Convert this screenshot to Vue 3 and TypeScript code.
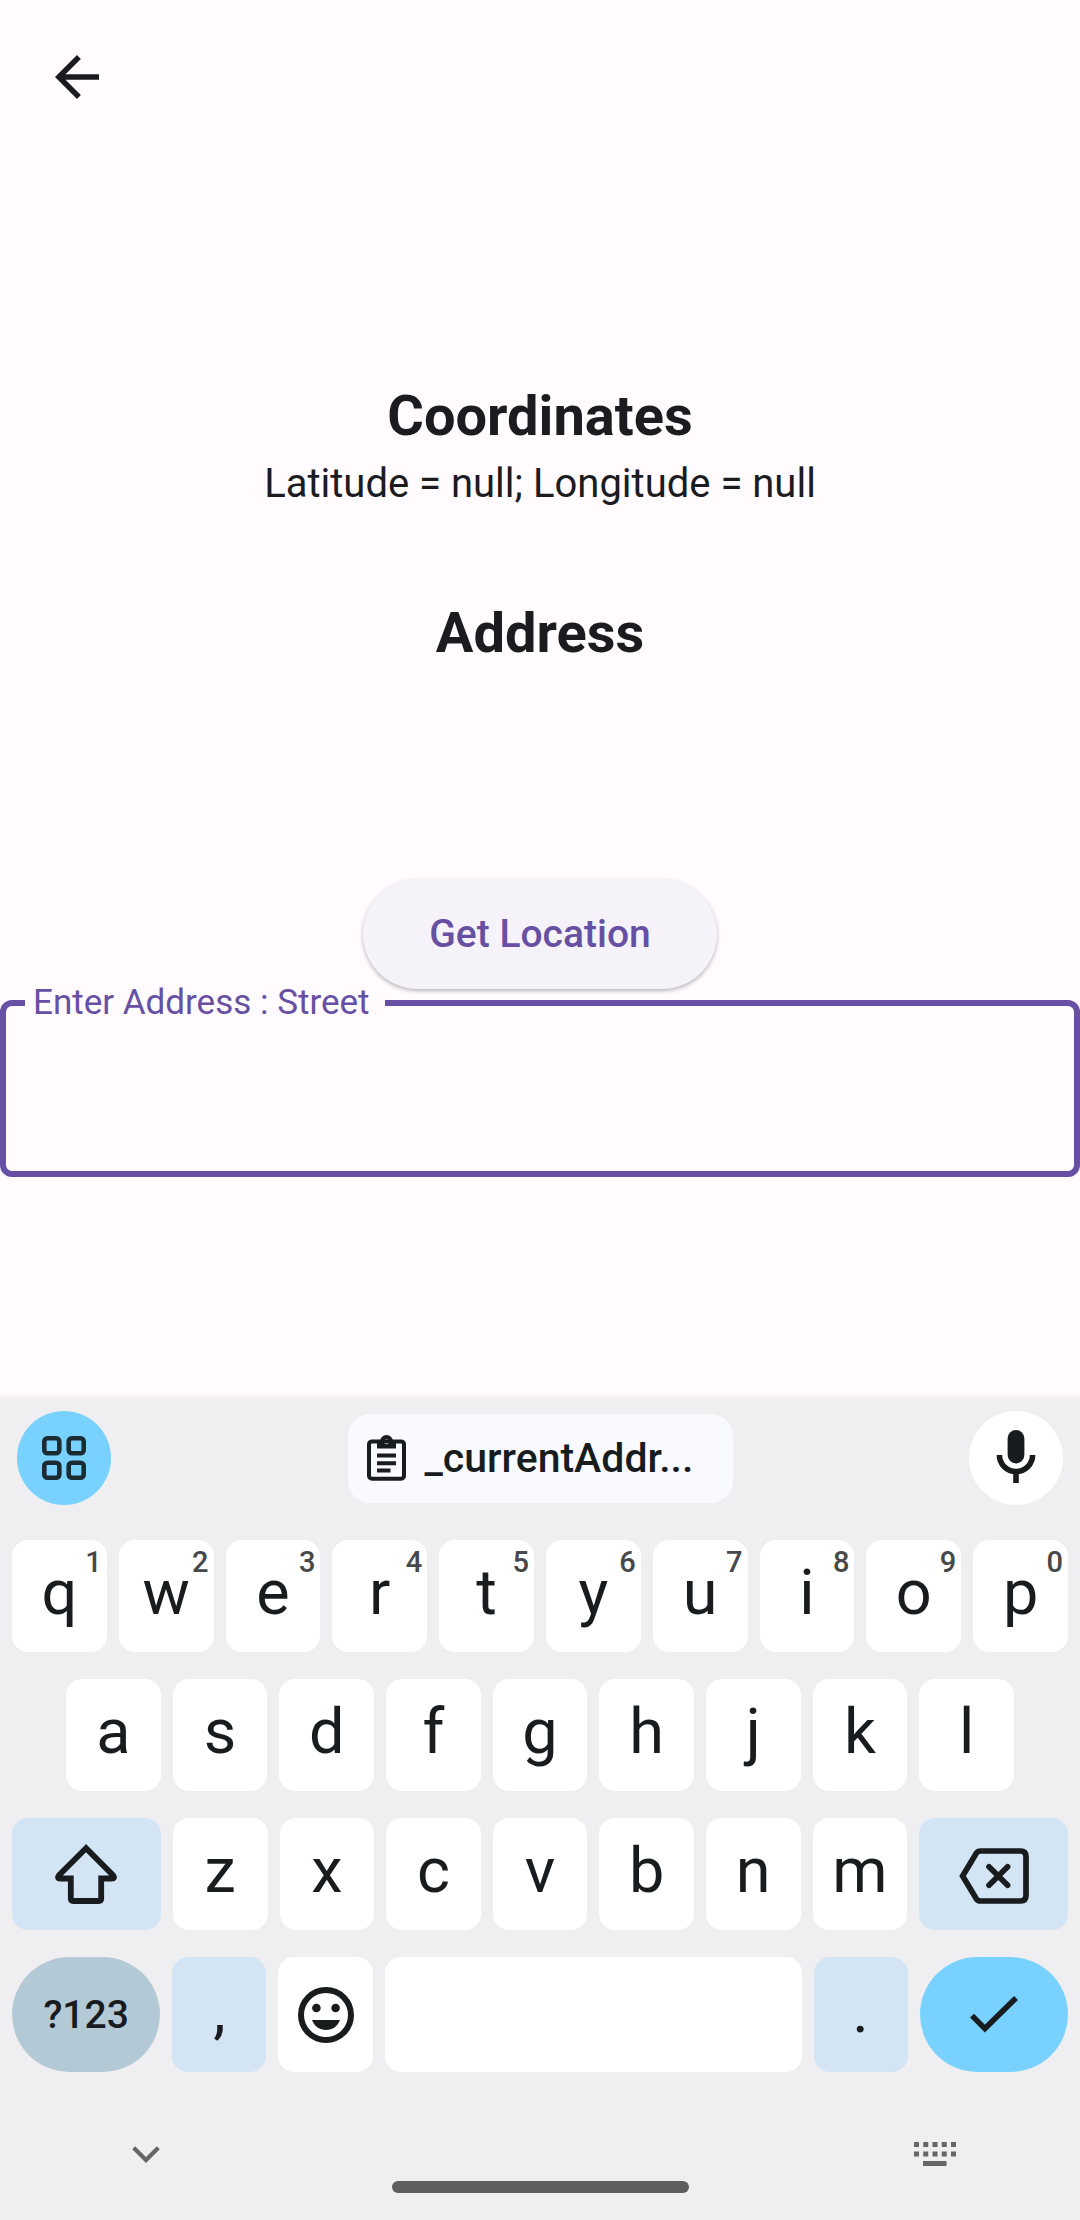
<script setup lang="ts">
import { onMounted, ref } from 'vue'

interface Key {
  id: string
  kind: 'letter' | 'tint' | 'mode' | 'enter' | 'space' | 'plain'
  text?: string
  hint?: string
  icon?: 'shift' | 'backspace' | 'emoji' | 'check'
  wide?: boolean
}

const letters = (s: string): Key[] => s.split('').map((c) => ({ id: c, kind: 'letter', text: c }))

const rows: Key[][] = [
  letters('qwertyuiop').map((k, i) => ({ ...k, hint: String((i + 1) % 10) })),
  letters('asdfghjkl'),
  [
    { id: 'Shift', kind: 'tint', icon: 'shift', wide: true },
    ...letters('zxcvbnm'),
    { id: 'Backspace', kind: 'tint', icon: 'backspace', wide: true },
  ],
  [
    { id: 'Symbols', kind: 'mode', text: '?123', wide: true },
    { id: 'Comma', kind: 'tint', text: ',' },
    { id: 'Emoji', kind: 'plain', icon: 'emoji' },
    { id: 'Space', kind: 'space' },
    { id: 'Period', kind: 'tint', text: '.' },
    { id: 'Done', kind: 'enter', icon: 'check', wide: true },
  ],
]

const latitude = ref<number | null>(null)
const longitude = ref<number | null>(null)
const street = ref('')
const streetInput = ref<HTMLInputElement | null>(null)

function press(key: Key) {
  if (key.kind === 'letter' || key.id === 'Comma' || key.id === 'Period') street.value += key.text
  else if (key.kind === 'space') street.value += ' '
  else if (key.id === 'Backspace') street.value = street.value.slice(0, -1)
}

onMounted(() => streetInput.value?.focus())
</script>

<template>
  <div class="screen">
    <header class="app-bar">
      <button class="icon-button" type="button" aria-label="Back">
        <svg width="66" height="66" viewBox="0 0 24 24" fill="currentColor">
          <path d="M20 11H7.83l5.59-5.59L12 4l-8 8 8 8 1.41-1.41L7.83 13H20v-2z" />
        </svg>
      </button>
    </header>

    <main class="content">
      <h1 class="title">Coordinates</h1>
      <p class="coords">Latitude = {{ latitude ?? 'null' }}; Longitude = {{ longitude ?? 'null' }}</p>
      <h2 class="title address">Address</h2>
      <button class="locate" type="button">Get Location</button>
      <fieldset class="field">
        <legend><label for="street">Enter Address : Street</label></legend>
        <input id="street" ref="streetInput" v-model="street" type="text" autocomplete="off" />
      </fieldset>
    </main>

    <section class="keyboard" aria-label="Keyboard">
      <div class="tools">
        <button class="round apps" type="button" aria-label="Features">
          <svg width="44" height="44" viewBox="0 0 44 44" fill="none" stroke="#1b2b34" stroke-width="4.6">
            <rect x="2.3" y="2.3" width="15" height="15" rx="3.2" />
            <rect x="26.7" y="2.3" width="15" height="15" rx="3.2" />
            <rect x="2.3" y="26.7" width="15" height="15" rx="3.2" />
            <rect x="26.7" y="26.7" width="15" height="15" rx="3.2" />
          </svg>
        </button>
        <button class="chip" type="button">
          <svg width="39" height="46" viewBox="0 0 39 46">
            <rect x="2" y="6.4" width="35" height="37.4" rx="3" fill="none" stroke="currentColor" stroke-width="4" />
            <path
              fill="currentColor"
              fill-rule="evenodd"
              d="M10 13.4V6.6H12.9A6.6 6.6 0 0 1 26.1 6.6H29V13.4ZM19.5 4.2a2.5 2.5 0 1 0 0 5 2.5 2.5 0 0 0 0-5Z"
            />
            <path d="M10 20.5H29M10 28.2H29M10 35.6H23.5" stroke="currentColor" stroke-width="4" />
          </svg>
          <span>_currentAddr...</span>
        </button>
        <button class="round mic" type="button" aria-label="Voice input">
          <svg width="40" height="56" viewBox="0 0 40 56">
            <rect x="11.6" y="0" width="16.8" height="33.5" rx="8.4" fill="currentColor" />
            <path
              d="M3.4 25a16.6 16.6 0 0 0 33.2 0M20 41.6V53"
              fill="none"
              stroke="currentColor"
              stroke-width="5.6"
            />
          </svg>
        </button>
      </div>

      <div class="keys">
        <div v-for="(row, r) in rows" :key="r" class="row" :class="{ inset: r === 1, last: r === 3 }">
          <button
            v-for="key in row"
            :key="key.id"
            type="button"
            class="key"
            :class="[key.kind, { wide: key.wide }]"
            :aria-label="key.id"
            @click="press(key)"
          >
            <span v-if="key.hint" class="hint">{{ key.hint }}</span>
            <span v-if="key.text" class="glyph">{{ key.text }}</span>
            <svg
              v-if="key.icon === 'shift'"
              width="62"
              height="60"
              viewBox="0 0 62 60"
              fill="none"
              stroke="currentColor"
              stroke-width="5.8"
            >
              <path
                d="M31 4.2 4 31.2Q1.5 34.5 5.5 34.5H15.8V54.5Q15.8 57 18.3 57H43.7Q46.2 57 46.2 54.5V34.5H56.5Q60.5 34.5 58 31.2Z"
              />
            </svg>
            <svg
              v-else-if="key.icon === 'backspace'"
              width="70"
              height="60"
              viewBox="0 -4 70 60"
              fill="none"
              stroke="currentColor"
              stroke-width="5.7"
            >
              <path d="M3.6 28 17.3 5.2Q18.8 3 21.5 3H61.5Q67 3 67 8.5V47.500Q67 53 61.500 53H21.500Q18.800 53 17.300 50.800Z" />
              <path d="M30 18.7 48.6 37.3M48.6 18.7 30 37.3" stroke-linecap="round" />
            </svg>
            <svg v-else-if="key.icon === 'emoji'" width="56" height="56" viewBox="0 0 56 56" fill="currentColor">
              <circle cx="28" cy="28" r="25" fill="none" stroke="currentColor" stroke-width="6" />
              <circle cx="18.4" cy="21" r="4.3" />
              <circle cx="37.6" cy="21" r="4.3" />
              <path d="M14 33H42C39.5 39.5 34.5 43 28 43S16.5 39.5 14 33Z" />
            </svg>
            <svg
              v-else-if="key.icon === 'check'"
              width="48"
              height="37"
              viewBox="0 0 48 37"
              fill="none"
              stroke="currentColor"
              stroke-width="5.6"
            >
              <path d="M2 19.6 14.9 32.6 46 2" />
            </svg>
          </button>
        </div>
      </div>

      <div class="nav">
        <button class="nav-button" type="button" aria-label="Hide keyboard">
          <svg width="28" height="17" viewBox="0 0 28 17" fill="none" stroke="currentColor" stroke-width="4.2">
            <path d="M1.7 1.7 14 14 26.3 1.7" />
          </svg>
        </button>
        <button class="nav-button" type="button" aria-label="Switch keyboard">
          <svg width="42" height="24" viewBox="0 0 42 24" fill="none" stroke="currentColor" stroke-width="5">
            <path d="M0 2.5H42M0 12H42" stroke-dasharray="5 4.25" />
            <path d="M9 21.5H32.5" />
          </svg>
        </button>
      </div>
      <div class="home-pill"></div>
    </section>
  </div>
</template>

<style>
body {
  margin: 0;
  background: #fffbff;
}
</style>

<style scoped>
.screen {
  display: flex;
  flex-direction: column;
  min-height: 100vh;
  background: #fffbff;
  color: #1c1b1f;
  font-family: Roboto, 'Liberation Sans', sans-serif;
}

button {
  margin: 0;
  padding: 0;
  border: 0;
  background: none;
  color: inherit;
  font: inherit;
  cursor: pointer;
}

svg {
  display: block;
  flex: none;
}

.app-bar {
  display: flex;
  align-items: center;
  box-sizing: border-box;
  height: 154px;
  padding: 0 44px;
}

.content {
  flex: 1;
  display: flex;
  flex-direction: column;
  align-items: center;
  justify-content: center;
}

.title {
  margin: 0;
  font-size: 56px;
  font-weight: 700;
  line-height: 80px;
}

.coords {
  margin: 0;
  font-size: 40px;
  line-height: 56px;
}

.address {
  margin-top: 81px;
}

.locate {
  height: 110px;
  margin-top: 206px;
  padding: 0 66px;
  border-radius: 55px;
  background: #f6f2f9;
  box-shadow: 0 2px 4px rgba(0, 0, 0, 0.28);
  color: #6750a4;
  font-size: 39px;
  font-weight: 500;
}

.field {
  align-self: stretch;
  min-width: 0;
  margin: -6px 0 0;
  padding: 0 19px;
  border: 6px solid #6750a4;
  border-radius: 12px;
}

.field legend {
  padding: 0 16px 0 8px;
  color: #6750a4;
  font-size: 35px;
  line-height: 40px;
}

.field input {
  display: block;
  box-sizing: border-box;
  width: 100%;
  height: 148px;
  padding: 0 14px;
  border: 0;
  outline: 0;
  background: transparent;
  color: inherit;
  caret-color: transparent;
  font: inherit;
  font-size: 44px;
}

.keyboard {
  padding: 13px 12px 27px;
  background: #efeff1;
  box-shadow: 0 0 6px rgba(60, 40, 60, 0.12);
  color: #191c1e;
}

.tools {
  display: flex;
  align-items: center;
  justify-content: space-between;
  padding: 0 5px;
}

.round {
  display: grid;
  place-items: center;
  width: 94px;
  height: 94px;
  border-radius: 50%;
}

.apps {
  background: #78d1ff;
}

.mic {
  background: #fff;
}

.chip {
  display: flex;
  align-items: center;
  gap: 19px;
  box-sizing: border-box;
  width: 385px;
  height: 89px;
  padding: 0 19px;
  border-radius: 22px;
  background: #f8faff;
  font-size: 41px;
  font-weight: 500;
}

.keys {
  display: flex;
  flex-direction: column;
  gap: 27px;
  margin-top: 35px;
}

.row {
  display: flex;
  gap: 12px;
  height: 112px;
}

.inset {
  padding: 0 54px;
}

.last {
  height: 115px;
}

.key {
  position: relative;
  display: flex;
  align-items: center;
  justify-content: center;
  flex: 94 1 0;
  min-width: 0;
  border-radius: 16px;
  background: #fff;
  font-size: 63px;
}

.wide {
  flex-grow: 148;
}

.space {
  flex-grow: 416;
}

.tint {
  background: #d3e5f4;
}

.mode {
  border-radius: 58px;
  background: #b4c9d6;
  font-size: 39px;
  font-weight: 500;
}

.enter {
  border-radius: 58px;
  background: #78d1ff;
}

.letter .glyph,
.tint .glyph {
  padding-bottom: 8px;
}

.hint {
  position: absolute;
  top: 5px;
  right: 5px;
  color: #46484a;
  font-size: 29px;
  font-weight: 500;
  line-height: 34px;
}

.nav {
  display: flex;
  align-items: center;
  justify-content: space-between;
  margin-top: 70px;
  padding: 0 112px 0 120px;
  color: #666;
}

.home-pill {
  width: 297px;
  height: 12px;
  margin: 15px auto 0;
  border-radius: 6px;
  background: #5e5e5e;
}
</style>
